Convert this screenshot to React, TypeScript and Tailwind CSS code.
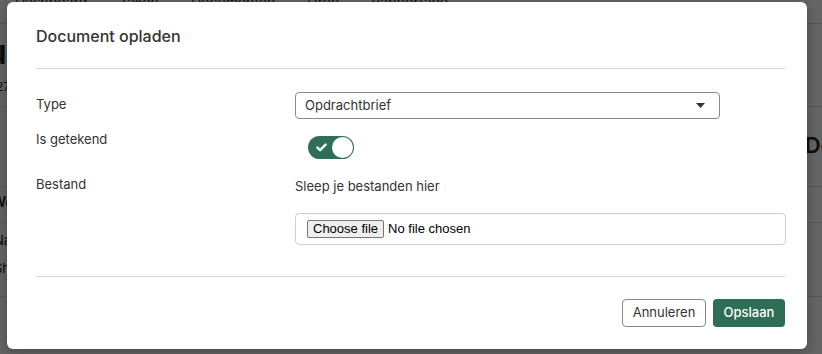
import React from "react";

export default function App() {
  const font = { fontFamily: "Inter, 'Noto Sans', sans-serif" } as React.CSSProperties;
  return (
    <div className="relative w-[822px] h-[354px] overflow-hidden bg-white text-[#212529]" style={font}>
      {/* background page */}
      <div className="flex flex-col">
        <div className="flex gap-[32px] pl-[15px] -mt-[9px] h-[20px] text-[14px] text-[#333]">
          <span>Dashboard</span>
          <span>Taken</span>
          <span>Documenten</span>
          <span>Uren</span>
          <span>Rapportage</span>
        </div>
        <div className="border-b border-[#ddd] mt-[12px]" />
        <div className="flex justify-between mt-[6px]">
          <span className="text-[34px] font-semibold leading-[44px] -ml-[14px]">ue</span>
          <span></span>
        </div>
        <div className="text-[12px] mt-[4px] -ml-[4px]">275</div>
        <div className="flex justify-end mt-[10px] border-b border-[#ddd]" />
        <div className="flex justify-end mt-[22px]">
          <span className="text-[22px] font-semibold -mr-[12px]">Do</span>
        </div>
        <div className="border-b border-[#ddd] mt-[24px]" />
        <div className="text-[14px] font-semibold mt-[4px] -ml-[8px]">Wgs</div>
        <div className="border-b border-[#ddd] mt-[10px]" />
        <div className="text-[13px] mt-[8px] -ml-[6px]">Na</div>
        <div className="text-[13px] mt-[8px] -ml-[6px]">Sh</div>
        <div className="border-b border-[#ddd] mt-[18px]" />
      </div>
      <div className="absolute inset-0 bg-black/60" />

      {/* modal */}
      <div className="absolute left-[7px] top-[2px] w-[800px] h-[347px] bg-white rounded-[6px] shadow-[0_4px_16px_rgba(0,0,0,0.3)] pl-[29px] pr-[22px] text-[#333]">
        <div className="h-[66px] flex items-center pt-[2px]">
          <h2 className="text-[16px] font-medium text-[#333]">Document opladen</h2>
        </div>
        <div className="border-t border-[#d6d6d6]" />

        <div className="grid grid-cols-[259px_1fr] mt-[23px] text-[13px]">
          {/* Type */}
          <div className="pt-[3px]">Type</div>
          <div>
            <div className="w-[425px] h-[27px] border border-[#8a8a8a] rounded-[4px] flex items-center justify-between pl-[9px] pr-[14px]">
              <span>Opdrachtbrief</span>
              <svg width="9" height="5" viewBox="0 0 9 5"><path d="M0 0h9L4.5 5z" fill="#333" /></svg>
            </div>
          </div>

          {/* Is getekend */}
          <div className="mt-[11px]">Is getekend</div>
          <div className="mt-[17px] pl-[13px]">
            <div className="w-[46px] h-[23px] rounded-full bg-[#2e6e56] relative">
              <svg className="absolute left-[8px] top-[7px]" width="11" height="9" viewBox="0 0 11 9">
                <path d="M1.4 4.6l2.7 2.6L9.6 1.6" stroke="white" strokeWidth="2.4" fill="none" strokeLinecap="round" strokeLinejoin="round" />
              </svg>
              <div className="absolute right-[1px] top-[1px] w-[21px] h-[21px] rounded-full bg-white" />
            </div>
          </div>

          {/* Bestand */}
          <div className="mt-[16px]">Bestand</div>
          <div className="mt-[18px]">
            <div className="text-[13px]">Sleep je bestanden hier</div>
            <div className="mt-[16px] w-[491px] h-[32px] border border-[#cfcfcf] rounded-[4px] flex items-center pl-[11px]">
              <span
                className="border border-[#767676] bg-[#efefef] rounded-[2px] px-[5px] h-[18px] flex items-center text-[13px] text-black"
                style={{ fontFamily: "'Liberation Sans', Arial, sans-serif" }}
              >
                Choose file
              </span>
              <span className="ml-[4px] text-[13px] text-black" style={{ fontFamily: "'Liberation Sans', Arial, sans-serif" }}>
                No file chosen
              </span>
            </div>
          </div>
        </div>

        <div className="border-t border-[#d6d6d6] mt-[31px]" />
        <div className="flex justify-end gap-[7px] mt-[22px] text-[13px]">
          <button className="h-[28px] w-[84px] border border-[#8a8a8a] rounded-[4px] bg-white text-[#333]">Annuleren</button>
          <button className="h-[28px] w-[72px] rounded-[4px] bg-[#2e6e56] text-white font-medium">Opslaan</button>
        </div>
      </div>
    </div>
  );
}
